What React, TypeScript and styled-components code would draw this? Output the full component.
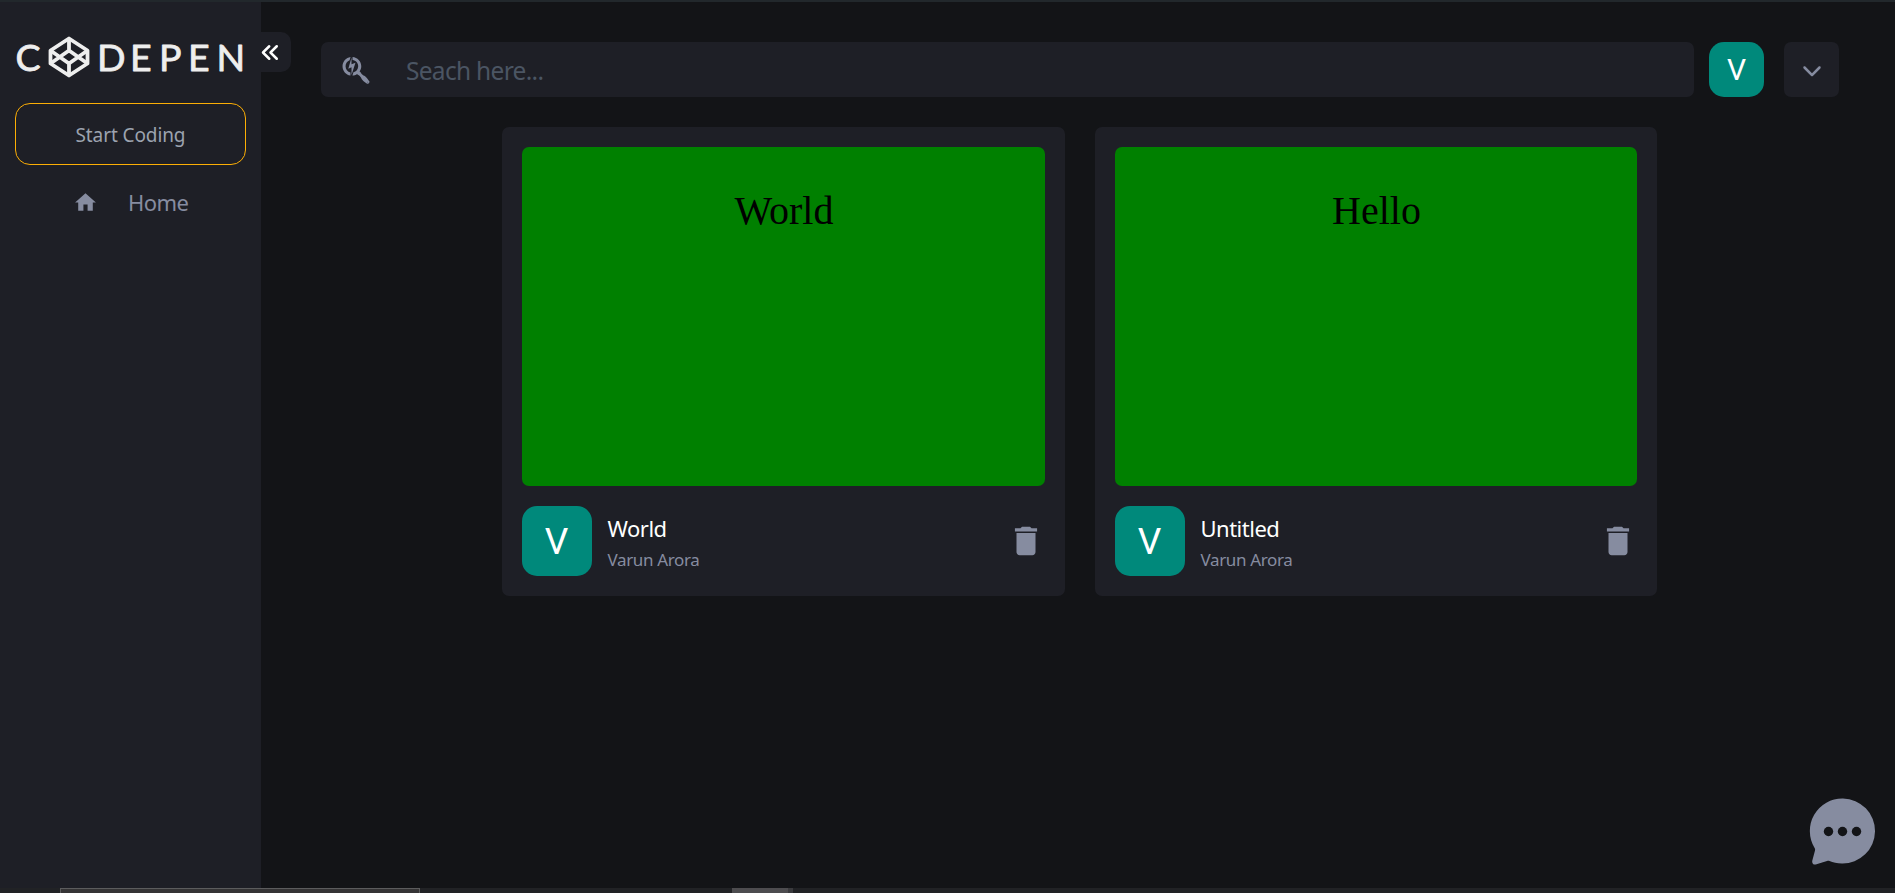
import React from "react";
import styled, { createGlobalStyle } from "styled-components";
import { MdHome, MdDelete } from "react-icons/md";
import { HiChevronDoubleLeft } from "react-icons/hi";
import { FaSearchengin, FaChevronDown } from "react-icons/fa6";

const GlobalStyle = createGlobalStyle`
  * { box-sizing: border-box; }
  body {
    margin: 0;
    background: #131417;
    color: #868ca0;
    font-family: "Noto Sans", "Open Sans", sans-serif;
    overflow: hidden;
  }
  svg { display: block; }
`;

const Screen = styled.div`
  width: 100vw;
  height: 100vh;
  display: flex;
  flex-direction: column;
`;

const TopEdge = styled.div`
  flex: 0 0 2px;
  background: #22282c;
`;

const Workspace = styled.div`
  flex: 1;
  display: flex;
  min-height: 0;
`;

const Sidebar = styled.aside`
  position: relative;
  flex: 0 0 261px;
  padding: 30px 15px 0;
  background: #1e1f26;
`;

const Collapse = styled.button`
  position: absolute;
  top: 30px;
  right: -30px;
  width: 30px;
  height: 40px;
  padding: 1px 0 0;
  border: 0;
  border-radius: 0 10px 10px 0;
  background: #1e1f26;
  color: #fff;
  display: flex;
  align-items: center;
  font-size: 25px;

  svg {
    margin-left: -3px;
  }
`;

const LogoArt = styled.svg`
  width: 231px;
  height: 50px;
`;

const StartButton = styled.button`
  width: 100%;
  height: 62px;
  margin-top: 21px;
  padding: 2px 0 0;
  border: 1px solid #fcae05;
  border-radius: 15px;
  background: transparent;
  color: #9ca3af;
  font: 400 19px "Noto Sans", sans-serif;
  letter-spacing: -0.1px;
`;

const NavLink = styled.a`
  display: flex;
  align-items: center;
  height: 34px;
  margin-top: 20px;
  padding-left: 58px;
  gap: 30px;
  font-size: 25px;
`;

const Label = styled.span<{ $size: number; $color?: string; $track?: number; $line?: number }>`
  font-size: ${(p) => p.$size}px;
  line-height: ${(p) => p.$line ?? 30}px;
  color: ${(p) => p.$color ?? "#868ca0"};
  letter-spacing: ${(p) => p.$track ?? 0}px;
  white-space: nowrap;
`;

const Main = styled.main`
  flex: 1;
  display: flex;
  flex-direction: column;
  align-items: center;
  padding: 40px 56px 0 60px;
`;

const TopBar = styled.header`
  width: 100%;
  height: 55px;
  display: flex;
`;

const SearchBox = styled.div`
  flex: 1;
  display: flex;
  align-items: center;
  padding-left: 20px;
  gap: 35px;
  border-radius: 7px;
  background: #1e1f26;
  font-size: 30px;

  ${Label} {
    padding-top: 3px;
  }
`;

const Avatar = styled.div<{ $size: number; $font: number }>`
  flex: none;
  width: ${(p) => p.$size}px;
  height: ${(p) => p.$size}px;
  padding-top: 1px;
  border-radius: 15px;
  background: #00897b;
  color: #fff;
  display: flex;
  align-items: center;
  justify-content: center;
  font-family: Roboto, sans-serif;
  font-size: ${(p) => p.$font}px;
`;

const AccountAvatar = styled(Avatar)`
  margin-left: 15px;
  padding-top: 0;
`;

const MenuButton = styled.button`
  width: 55px;
  height: 55px;
  margin-left: 20px;
  padding: 0;
  border: 0;
  border-radius: 7px;
  background: #1e1f26;
  color: #868ca0;
  display: flex;
  align-items: center;
  justify-content: center;
  font-size: 20px;
`;

const Projects = styled.section`
  display: grid;
  grid-template-columns: 563px 562px;
  gap: 30px;
  margin: 30px 2px 0 0;
`;

const Card = styled.article`
  height: 469px;
  padding: 20px;
  border-radius: 7px;
  background: #1e1f26;
  display: flex;
  flex-direction: column;
  gap: 20px;
`;

const Preview = styled.div`
  height: 339px;
  padding: 41px 0 0 2px;
  border-radius: 7px;
  background: #008000;
  color: #000;
  text-align: center;
  font: 40px/46px "Liberation Serif", serif;
`;

const Meta = styled.footer`
  display: flex;
  align-items: center;
`;

const Names = styled.div`
  display: flex;
  flex-direction: column;
  margin-left: 16px;
  padding-top: 5px;
  gap: 2px;
  flex: 1;
`;

const DeleteButton = styled.button`
  border: 0;
  padding: 0;
  background: none;
  color: #868ca0;
  font-size: 38px;
`;

const ChatButton = styled.button`
  position: absolute;
  right: 19px;
  bottom: 27px;
  border: 0;
  padding: 0;
  background: none;
`;

const Taskbar = styled.div`
  flex: 0 0 5px;
  display: flex;
  background: #212225;
`;

const TaskField = styled.div`
  width: 360px;
  margin: 0 312px 0 60px;
  border: 1px solid #5c5c5d;
  border-bottom: 0;
  background: #353435;
`;

const TaskItem = styled.div<{ $width: number; $color: string }>`
  width: ${(p) => p.$width}px;
  background: ${(p) => p.$color};
`;

const letters: [string, number][] = [["C", 0.5], ["D", 82], ["E", 115], ["P", 144], ["E", 173], ["N", 201.5]];

function Logo() {
  return (
    <LogoArt viewBox="0 0 231 50">
      <g fill="#eee" stroke="#eee" strokeWidth="0.8" strokeLinejoin="round" fontFamily="Lato, sans-serif" fontSize="37.5">
        {letters.map(([letter, x]) => (
          <text key={x} x={x} y="38.5">{letter}</text>
        ))}
      </g>
      <g fill="none" stroke="#eee" strokeWidth="3.8" strokeLinejoin="round">
        <path d="M54 6.5 72.5 18.5V31.5L54 43.5 35.5 31.5V18.5Z" />
        <path d="M54 6.5V18.5M54 31.5V43.5M35.5 18.5 54 31.5 72.5 18.5M35.5 31.5 54 18.5 72.5 31.5" />
      </g>
    </LogoArt>
  );
}

function ProjectCard({ heading, title }: { heading: string; title: string }) {
  return (
    <Card>
      <Preview>{heading}</Preview>
      <Meta>
        <Avatar $size={70} $font={37}>V</Avatar>
        <Names>
          <Label $size={22} $color="#fff" $track={-0.5}>{title}</Label>
          <Label $size={17} $track={-0.35}>Varun Arora</Label>
        </Names>
        <DeleteButton aria-label="Delete"><MdDelete /></DeleteButton>
      </Meta>
    </Card>
  );
}

export default function App() {
  return (
    <Screen>
      <GlobalStyle />
      <TopEdge />
      <Workspace>
        <Sidebar>
          <Collapse aria-label="Collapse"><HiChevronDoubleLeft /></Collapse>
          <Logo />
          <StartButton>Start Coding</StartButton>
          <NavLink>
            <MdHome />
            <Label $size={22} $track={-0.6}>Home</Label>
          </NavLink>
        </Sidebar>
        <Main>
          <TopBar>
            <SearchBox>
              <FaSearchengin />
              <Label $size={24.5} $color="#4b5563" $track={-0.7}>Seach here...</Label>
            </SearchBox>
            <AccountAvatar $size={55} $font={30}>V</AccountAvatar>
            <MenuButton aria-label="Menu"><FaChevronDown /></MenuButton>
          </TopBar>
          <Projects>
            <ProjectCard heading="World" title="World" />
            <ProjectCard heading="Hello" title="Untitled" />
          </Projects>
        </Main>
      </Workspace>
      <ChatButton aria-label="Chat">
        <svg width="68" height="68" viewBox="0 0 68 68">
          <path
            fill="#868ca0"
            d="M35 .5a32.5 32.5 0 1 1-1 65c-5 0-9-1-12.5-2.5-1-.4-1.5-.4-2.5 0L8.5 66.3C5.5 67.2 4 65.5 4.200 63L7 52.5c.2-1 .1-1.7-.4-2.600A32.5 32.5 0 0 1 35 .5Z"
          />
          <g fill="#131417">
            <circle cx="20.5" cy="33.5" r="4.7" />
            <circle cx="34.5" cy="33.5" r="4.7" />
            <circle cx="48.5" cy="33.5" r="4.7" />
          </g>
        </svg>
      </ChatButton>
      <Taskbar>
        <TaskField />
        <TaskItem $width={56} $color="#4d4c4f" />
        <TaskItem $width={5} $color="#3a3a3d" />
      </Taskbar>
    </Screen>
  );
}
